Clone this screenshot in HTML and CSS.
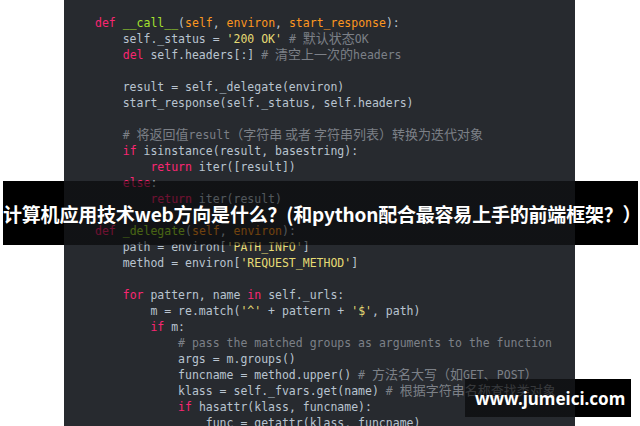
FILE: index.html
```html
<!DOCTYPE html>
<html lang="zh-CN">
<head>
    <meta charset="UTF-8">
    <meta name="viewport" content="width=device-width, initial-scale=1.0">
    <title>计算机应用技术web方向是什么？</title>
    <link rel="stylesheet" href="styles.css">
</head>
<body>
    <div class="page">
        <div class="panel">
<pre class="code"><span class="kw">def</span> <span class="fn">__call__</span>(<span class="arg">self</span>, <span class="arg">environ</span>, <span class="arg">start_response</span>):
    self._status = <span class="str">'200 OK'</span> <span class="cm"># <span class="zh">默认状态</span>OK</span>
    <span class="kw">del</span> self.headers[:] <span class="cm"># <span class="zh">清空上一次的</span>headers</span>

    result = self._delegate(environ)
    start_response(self._status, self.headers)

    <span class="cm"># <span class="zh">将返回值</span>result<span class="zh">（字符串 或者 字符串列表）转换为迭代对象</span></span>
    <span class="kw">if</span> isinstance(result, basestring):
        <span class="kw">return</span> iter([result])
    <span class="kw">else</span>:
        <span class="kw">return</span> iter(result)

<span class="kw">def</span> <span class="fn">_delegate</span>(<span class="arg">self</span>, <span class="arg">environ</span>):
    path = environ[<span class="str">'PATH_INFO'</span>]
    method = environ[<span class="str">'REQUEST_METHOD'</span>]

    <span class="kw">for</span> pattern, name <span class="kw">in</span> self._urls:
        m = re.match(<span class="str">'^'</span> + pattern + <span class="str">'$'</span>, path)
        <span class="kw">if</span> m:
            <span class="cm"># pass the matched groups as arguments to the function</span>
            args = m.groups()
            funcname = method.upper() <span class="cm"># <span class="zh">方法名大写（如</span>GET<span class="zh">、</span>POST<span class="zh">）</span></span>
            klass = self._fvars.get(name) <span class="cm"># <span class="zh">根据字符串名称查找类对象</span></span>
            <span class="kw">if</span> hasattr(klass, funcname):
                func = getattr(klass, funcname)
</pre>
        </div>

        <!-- 标题横幅 -->
        <div class="banner">计算机应用技术web方向是什么？(和python配合最容易上手的前端框架？）</div>

        <!-- 水印 -->
        <div class="mark">www.jumeici.com</div>
    </div>
</body>
</html>
```

FILE: styles.css
```css
    html, body{
        margin: 0;
        padding: 0;
        background: #ffffff;
    }

    .page{
        position: relative;
        width: 640px;
        height: 426px;
        overflow: hidden;
    }

    .panel{
        width: 511px;
        height: 426px;
        margin-left: 64px;
        background: #272a2f;
        overflow: hidden;
    }

    .code{
        margin: 0;
        padding: 15px 0 0 31px;
        font-family: "DejaVu Sans Mono", "Noto Sans CJK SC", monospace;
        font-size: 11.5px;
        line-height: 16px;
        color: #b9c4d0;
        white-space: pre;
    }

    .kw{ color: #f92672; }
    .fn{ color: #a6e22e; }
    .arg{ color: #fd971f; }
    .str{ color: #e6db74; }
    .cm{ color: #7c8087; }

    /* bigger CJK glyphs, but they must not push the line height */
    .zh{
        font-family: "Noto Sans CJK SC", sans-serif;
        font-size: 13px;
        line-height: 0;
    }

    /* black over the white margins, see-through over the code */
    .banner{
        position: absolute;
        left: 3px;
        top: 181px;
        width: 635px;
        height: 64px;
        display: flex;
        align-items: center;
        background: linear-gradient(to right, #000 61px, rgba(0,0,0,.56) 61px, rgba(0,0,0,.56) 572px, #000 572px);
        color: #ffffff;
        font-family: "Noto Sans CJK SC", sans-serif;
        font-weight: bold;
        font-size: 19px;
        white-space: nowrap;
        letter-spacing: -0.2px;
    }

    .mark{
        position: absolute;
        left: 465px;
        top: 379px;
        width: 166px;
        height: 38px;
        display: flex;
        align-items: center;
        padding-left: 10px;
        box-sizing: border-box;
        background: linear-gradient(to right, rgba(0,0,0,.56) 110px, #000 110px);
        color: #ffffff;
        font-family: "Noto Sans", sans-serif;
        font-weight: bold;
        font-size: 17px;
    }
```
